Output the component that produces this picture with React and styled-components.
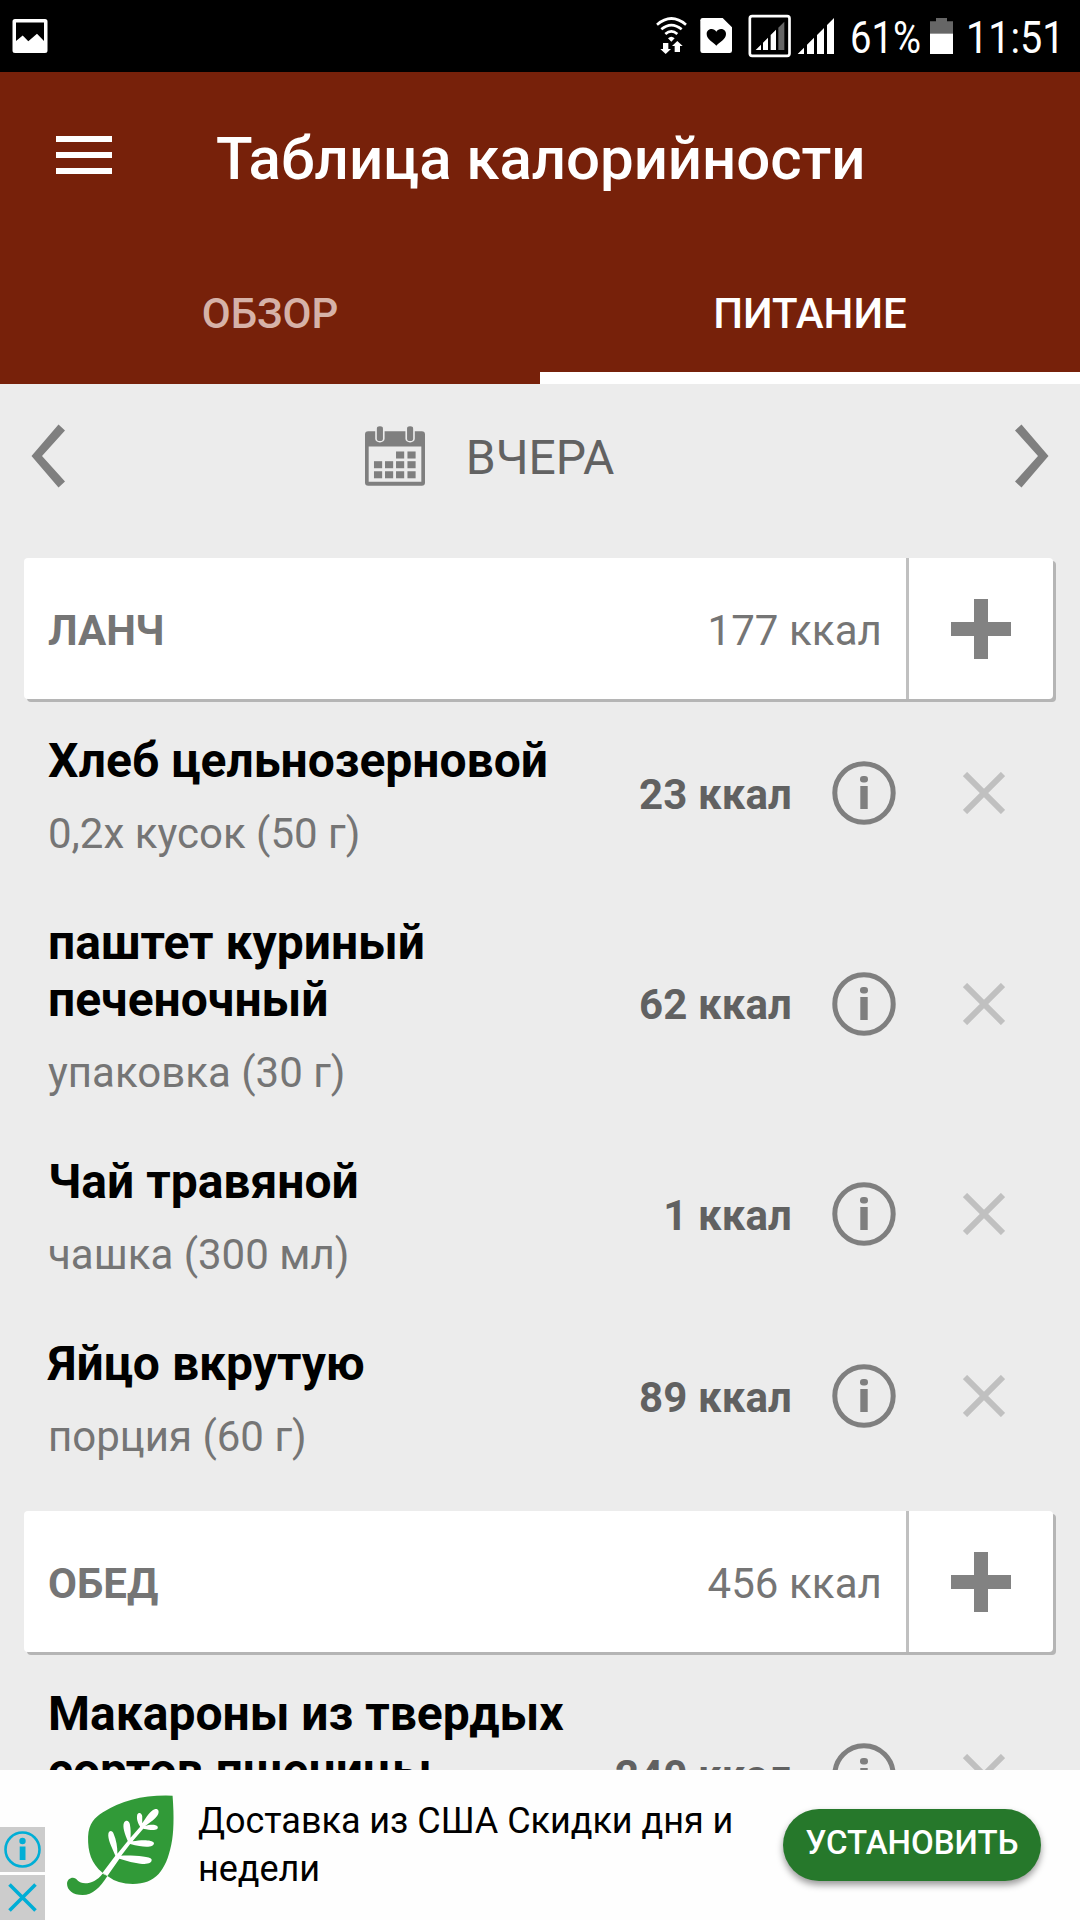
import React, { useState } from "react";
import styled, { createGlobalStyle } from "styled-components";

/* 样式 */
const GlobalStyle = createGlobalStyle`
    * {
        box-sizing: border-box;
    }

    body {
        margin: 0;
        background: #ececec;
        font-family: Roboto, "Noto Sans", sans-serif;
    }

    svg {
        display: block;
        flex-shrink: 0;
    }
`;

const Screen = styled.div`
    display: flex;
    flex-direction: column;
    width: 1080px;
    height: 1920px;
    overflow: hidden;
    background: #ececec;
`;

const StatusBar = styled.div`
    display: flex;
    flex-shrink: 0;
    height: 72px;
    background: #000;

    .spacer {
        flex: 1;
    }
`;

const StatusText = styled.div`
    width: ${props => props.$width}px;
    padding: 3px 0 0 ${props => props.$indent}px;
    line-height: 69px;
    font-size: 45px;
    color: #fff;
    white-space: nowrap;

    span {
        display: inline-block;
        transform: scaleX(${props => props.$scale});
        transform-origin: 0 50%;
    }
`;

const Header = styled.header`
    flex-shrink: 0;
    height: 312px;
    background: #77210a;
    color: #fff;
`;

const Toolbar = styled.div`
    display: flex;
    align-items: center;
    height: 168px;
    padding-left: 56px;

    h1 {
        margin: 6px 0 0 104px;
        font-size: 60px;
        font-weight: 500;
        line-height: 72px;
        letter-spacing: -.05px;
        white-space: nowrap;
    }
`;

const Burger = styled.div`
    display: flex;
    flex-direction: column;
    justify-content: space-between;
    width: 56px;
    height: 38px;
    margin-bottom: 2px;

    i {
        height: 6px;
        background: #fff;
    }
`;

const Tabs = styled.nav`
    display: flex;
    height: 144px;
`;

const Tab = styled.div`
    flex: 1;
    height: 144px;
    padding-top: 5px;
    border-bottom: 12px solid ${props => props.$active ? '#fff' : 'transparent'};
    line-height: 138px;
    font-size: 42px;
    font-weight: 500;
    text-align: center;
    color: ${props => props.$active ? '#fff' : '#d6b2a8'};
    cursor: pointer;
`;

const DateBar = styled.div`
    display: flex;
    flex-shrink: 0;
    align-items: center;
    justify-content: space-between;
    height: 144px;
    padding: 0 31px;
    margin-bottom: 30px;

    .current {
        display: flex;
        align-items: center;
        margin-right: 101px;
        font-size: 48px;
        color: #626262;
    }

    .label {
        margin: 4px 0 0 41px;
        line-height: 56px;
    }
`;

const Content = styled.main`
    flex: 1;
    min-height: 0;
    overflow: hidden;
`;

const MealCard = styled.div`
    display: flex;
    width: 1029px;
    height: 141px;
    margin: 0 0 3px 24px;
    border-radius: 4px;
    background: #fff;
    box-shadow: 3px 3px 0 #b5b5b5;
    line-height: 145px;
    font-size: 42px;
    color: #757575;

    .title {
        flex: 1;
        padding-left: 24px;
        font-weight: 700;
    }

    .total {
        padding-right: 24px;
        letter-spacing: .1px;
    }

    .add {
        display: flex;
        align-items: center;
        justify-content: center;
        width: 147px;
        border-left: 3px solid #c0c0c0;
    }
`;

const FoodList = styled.div`
    margin-bottom: 24px;
`;

const FoodRow = styled.div`
    display: flex;
    align-items: center;
    min-height: 182px;
    padding: 30px 75px 26px 48px;
`;

const FoodText = styled.div`
    width: 552px;

    .name {
        line-height: 57px;
        font-size: 48px;
        font-weight: 700;
        color: #000;
    }

    .portion {
        margin-top: 20px;
        line-height: 49px;
        font-size: 42px;
        color: #757575;
    }
`;

const FoodActions = styled.div`
    display: flex;
    flex: 1;
    align-items: center;
    justify-content: flex-end;
    margin-top: -4px;

    .kcal {
        margin: 2px 40px 0 0;
        line-height: 49px;
        font-size: 42px;
        font-weight: 700;
        letter-spacing: .1px;
        color: #616161;
        white-space: nowrap;
    }

    .remove {
        margin-left: 67px;
    }
`;

const AdBanner = styled.footer`
    display: flex;
    flex-shrink: 0;
    align-items: flex-start;
    height: 150px;
    background: #fefefe;

    .text {
        width: 585px;
        margin: 27px 0 0 23px;
        line-height: 48px;
        font-size: 36px;
        letter-spacing: -.03px;
        color: #000;
    }
`;

const AdBadges = styled.div`
    display: flex;
    flex-direction: column;
    gap: 3px;
    width: 45px;
    margin: 57px 21px 0 0;

    svg {
        background: #ccc;
    }
`;

const InstallButton = styled.button`
    width: 258px;
    height: 72px;
    margin: 39px 0 0;
    padding: 0 0 6px;
    border: 0;
    border-radius: 36px;
    background: #26782b;
    box-shadow: 0 4px 7px rgba(0, 0, 0, .4);
    font-family: inherit;
    font-size: 33px;
    font-weight: 500;
    color: #fff;
    white-space: nowrap;
`;

/* 图标 */
const PictureIcon = () => <svg width="60" height="72" viewBox="0 0 60 72">
    <path fill="#fff" fillRule="evenodd" d="M15 19h30q2.500 0 2.500 2.500v29q0 2.500-2.500 2.500H15q-2.500 0-2.500-2.500v-29Q12.500 19 15 19ZM16 22.500V41l6.700-5.500 5.600 5.800 8.700-7.600 7 7.300V22.500Z" />
</svg>;

const WifiIcon = () => <svg width="40" height="72" viewBox="42 0 120 216">
    <g fill="none" stroke="#fff" strokeWidth="8">
        <path d="M51 74Q94 37 138 74" />
        <path d="M64 88Q94 63 125 88" />
        <path d="M76 102Q94 86 112 102" />
    </g>
    <path fill="#fff" d="M84 115Q94 106 104 115L94 125ZM69 129H85V147H93L77 162L61 147H69ZM104 156H120V138H128L112 123L96 138H104Z" />
</svg>;

const SimHeartIcon = () => <svg width="48" height="72" viewBox="162 0 144 216">
    <path fill="#fff" d="M188 54H248L276 82V152Q276 159 269 159H188Q181 159 181 152V61Q181 54 188 54Z" />
    <path d="M229 137C221 128 200 118 200 102C200 86 221 82 229 95C237 82 258 86 258 102C258 118 237 128 229 137Z" />
</svg>;

const SignalBoxIcon = () => <svg width="52" height="72" viewBox="306 0 156 216">
    <rect x="329.500" y="48.500" width="119" height="119" rx="7" fill="none" stroke="#fff" strokeWidth="8" />
    <path fill="#fff" d="M347 150L363 134V150ZM369 128L384 113V150H369ZM392 105L408 89V150H392Z" />
    <path fill="#666" d="M415 83L433 65V150H415Z" />
</svg>;

const SignalIcon = () => <svg width="48" height="72" viewBox="462 0 144 216">
    <path fill="#fff" d="M473 162L492 143V162ZM501 134L522 113V162H501ZM531 105L552 84V162H531ZM561 75L582 54V162H561Z" />
</svg>;

const BatteryIcon = () => <svg width="36" height="72" viewBox="852 0 108 216">
    <path fill="#666" d="M888 54H921V64H939V102H870V64H888Z" />
    <rect x="870" y="101" width="69" height="61" fill="#fff" />
</svg>;

const Chevron = ({ flip }) => <svg width="34" height="64" viewBox="0 0 34 64">
    <path fill="#7f7f7f" transform={flip ? 'matrix(-1 0 0 1 34 0)' : undefined} d="M27.500 .5L34 6.500 11 32 34 57.500 27.500 63.500 .5 32Z" />
</svg>;

const CalendarIcon = () => {
    let cells = [[968, 153], [996, 153]];
    [182, 212].forEach(y => [914, 941, 968, 996].forEach(x => cells.push([x, y])));
    return <svg width="60" height="60" viewBox="892 77 147 179" preserveAspectRatio="none">
        <path fill="#7f7f7f" fillRule="evenodd" d="M900 93H1031Q1039 93 1039 102V246Q1039 255 1031 255H900Q892 255 892 246V102Q892 93 900 93ZM901 138V243H1030V138Z" />
        <g fill="#7f7f7f" stroke="#ececec" strokeWidth="4">
            <rect x="919" y="76" width="19" height="48" rx="9" />
            <rect x="993" y="76" width="19" height="48" rx="9" />
        </g>
        {cells.map(([x, y]) => <rect key={`${x}-${y}`} x={x} y={y} width="20" height="21" fill="#7f7f7f" />)}
    </svg>;
};

const PlusIcon = () => <svg width="60" height="60" viewBox="0 0 60 60">
    <path fill="#828282" d="M23 0H37V23H60V37H37V60H23V37H0V23H23Z" />
</svg>;

const InfoIcon = () => <svg width="64" height="64" viewBox="0 0 64 64" fill="#7f7f7f">
    <circle cx="32" cy="32" r="29.200" fill="none" stroke="#7f7f7f" strokeWidth="5" />
    <rect x="28" y="15" width="8" height="6.500" rx="3.200" />
    <rect x="28.300" y="25" width="7.400" height="23" />
</svg>;

const RemoveIcon = () => <svg className="remove" width="42" height="42" viewBox="0 0 42 42">
    <path stroke="#c0c0c0" strokeWidth="6" d="M2 2L40 40M40 2L2 40" />
</svg>;

const AdInfoIcon = () => <svg width="45" height="45" viewBox="0 0 45 45" fill="#00aed6">
    <circle cx="22.500" cy="22.500" r="17" fill="none" stroke="#00aed6" strokeWidth="2.600" />
    <circle cx="22.500" cy="14" r="3.200" />
    <rect x="19.700" y="19.500" width="5.800" height="13.500" />
</svg>;

const AdCloseIcon = () => <svg width="45" height="45" viewBox="0 0 45 45">
    <path stroke="#00aed6" strokeWidth="3.600" d="M9.500 9.500L35.500 35.500M35.500 9.500L9.500 35.500" />
</svg>;

const LeafLogo = () => <svg width="109" height="150" viewBox="190 90 316 450" preserveAspectRatio="none">
    <path fill="#319a38" d="M499 167Q506 262 495 315C480 390 450 432 384 432Q340 432 310 408L296 398C263 370 253 335 254 290C256 250 273 233 297 217Q380 162 499 167Z" />
    <path fill="#319a38" d="M296 401L310 408C288 443 268 465 238 465C210 465 193 450 193 431C193 412 216 407 223 421C238 437 275 431 296 401Z" />
    <path fill="#fff" d="M296 398L333 347C322 320 310 297 313 280C316 270 325 272 328 281C336 300 339 320 339 341L369 303C361 282 353 262 358 248C364 238 373 242 375 252C378 267 378 281 377 293L405 260C396 247 394 232 397 223C402 215 410 219 411 229L411 250C423 231 434 213 447 208C457 205 461 213 457 223C450 237 435 246 419 259C434 253 450 253 456 260C458 270 445 273 414 266L383 304C410 299 440 299 445 309C446 322 420 325 376 312L350 347C390 346 433 349 438 358C441 370 425 374 405 371Q376 367 345 356L310 408Z" />
</svg>;

/* 数据 */
const meals = [
    {
        title: 'ЛАНЧ',
        total: '177 ккал',
        foods: [
            { name: 'Хлеб цельнозерновой', portion: '0,2x кусок (50 г)', kcal: '23 ккал' },
            { name: 'паштет куриный печеночный', portion: 'упаковка (30 г)', kcal: '62 ккал' },
            { name: 'Чай травяной', portion: 'чашка (300 мл)', kcal: '1 ккал' },
            { name: 'Яйцо вкрутую', portion: 'порция (60 г)', kcal: '89 ккал' }
        ]
    },
    {
        title: 'ОБЕД',
        total: '456 ккал',
        foods: [
            { name: 'Макароны из твердых сортов пшеницы', portion: 'порция (70 г)', kcal: '240 ккал' }
        ]
    }
];
const tabs = ['ОБЗОР', 'ПИТАНИЕ'];

const Meal = function Meal({ title, total, foods }) {
    return <>
        <MealCard>
            <div className="title">{title}</div>
            <div className="total">{total}</div>
            <div className="add"><PlusIcon /></div>
        </MealCard>
        <FoodList>
            {foods.map(({ name, portion, kcal }) => <FoodRow key={name}>
                <FoodText>
                    <div className="name">{name}</div>
                    <div className="portion">{portion}</div>
                </FoodText>
                <FoodActions>
                    <div className="kcal">{kcal}</div>
                    <InfoIcon />
                    <RemoveIcon />
                </FoodActions>
            </FoodRow>)}
        </FoodList>
    </>;
};

const App = function App() {
    let [active, setActive] = useState(1);

    return <Screen>
        <GlobalStyle />
        <StatusBar>
            <PictureIcon />
            <div className="spacer" />
            <WifiIcon />
            <SimHeartIcon />
            <SignalBoxIcon />
            <SignalIcon />
            <StatusText $width={82} $indent={8} $scale={0.85}><span>61%</span></StatusText>
            <BatteryIcon />
            <StatusText $width={120} $indent={6} $scale={0.88}><span>11:51</span></StatusText>
        </StatusBar>
        <Header>
            <Toolbar>
                <Burger><i /><i /><i /></Burger>
                <h1>Таблица калорийности</h1>
            </Toolbar>
            <Tabs>
                {tabs.map((item, index) => <Tab key={item}
                    $active={index === active}
                    onClick={() => setActive(index)}>
                    {item}
                </Tab>)}
            </Tabs>
        </Header>
        <Content>
            <DateBar>
                <Chevron />
                <div className="current">
                    <CalendarIcon />
                    <div className="label">ВЧЕРА</div>
                </div>
                <Chevron flip />
            </DateBar>
            {meals.map(item => <Meal key={item.title} {...item} />)}
        </Content>
        <AdBanner>
            <AdBadges>
                <AdInfoIcon />
                <AdCloseIcon />
            </AdBadges>
            <LeafLogo />
            <div className="text">Доставка из США Скидки дня и<br />недели</div>
            <InstallButton>УСТАНОВИТЬ</InstallButton>
        </AdBanner>
    </Screen>;
};
export default App;
